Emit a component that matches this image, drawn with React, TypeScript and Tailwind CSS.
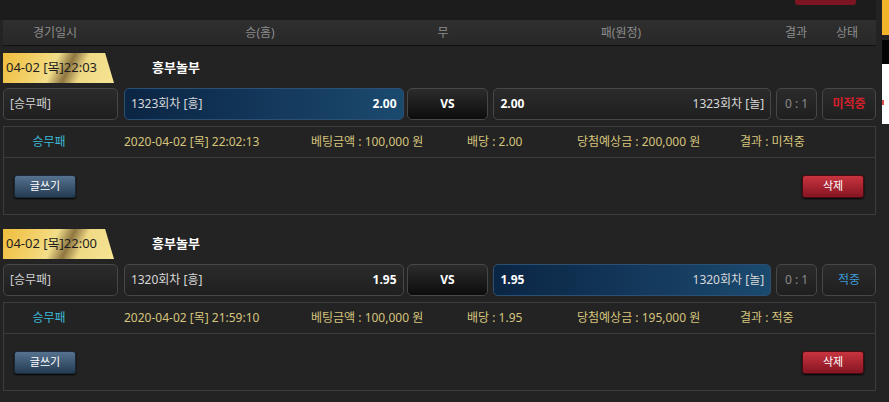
import React from "react"

interface Bet {
  time: string
  name: string
  round: string
  home: string
  away: string
  pick: "home" | "away"
  score: string
  status: string
  win: boolean
  placed: string
  amount: string
  odds: string
  payout: string
}

const bets: Bet[] = [
  {
    time: "04-02 [목]22:03",
    name: "흥부놀부",
    round: "1323회차",
    home: "2.00",
    away: "2.00",
    pick: "home",
    score: "0 : 1",
    status: "미적중",
    win: false,
    placed: "2020-04-02 [목] 22:02:13",
    amount: "100,000 원",
    odds: "2.00",
    payout: "200,000 원",
  },
  {
    time: "04-02 [목]22:00",
    name: "흥부놀부",
    round: "1320회차",
    home: "1.95",
    away: "1.95",
    pick: "away",
    score: "0 : 1",
    status: "적중",
    win: true,
    placed: "2020-04-02 [목] 21:59:10",
    amount: "100,000 원",
    odds: "1.95",
    payout: "195,000 원",
  },
]

const box = "h-[32px] rounded-[5px] border border-[#474747] bg-[linear-gradient(#2b2b2b,#1f1f1f)] flex items-center"
const picked = "h-[32px] rounded-[5px] border border-[#2c4f74] bg-[linear-gradient(90deg,#0b2544,#1b4a6f)] flex items-center"

function BetCard({ bet }: { bet: Bet }) {
  return (
    <div className="mt-[7px] mb-[14px]">
      <div className="flex items-center h-[30px]">
        <div className="w-[111px] h-[30px] flex items-center pl-[3px] text-[13px] text-[#1e1e1e] [clip-path:polygon(0_0,92%_0,100%_100%,0_100%)] bg-[linear-gradient(115deg,#f0bd3c_0%,#f3d574_35%,#f2de8a_45%,#8f7640_58%,#efd985_70%,#f6e594_100%)]">
          {bet.time}
        </div>
        <div className="ml-[38px] text-[13px] font-bold text-white">{bet.name}</div>
      </div>

      <div className="flex mt-[5px] text-[12px]">
        <div className={`${box} w-[115px] pl-[6px] text-[#cfcfcf]`}>[승무패]</div>
        <div className={`${bet.pick === "home" ? picked : box} ml-[6px] w-[280px] justify-between px-[6px]`}>
          <span className="text-[#d8d8d8]">{bet.round} [흥]</span>
          <span className="font-bold text-white">{bet.home}</span>
        </div>
        <div className="ml-[3px] w-[82px] h-[32px] rounded-[5px] border border-[#474747] bg-[linear-gradient(#2c2c2c,#0c0c0c)] flex items-center justify-center font-bold text-white">
          VS
        </div>
        <div className={`${bet.pick === "away" ? picked : box} ml-[5px] w-[278px] justify-between px-[6px]`}>
          <span className="font-bold text-white">{bet.away}</span>
          <span className="text-[#d8d8d8]">{bet.round} [놀]</span>
        </div>
        <div className={`${box} ml-[5px] w-[41px] justify-center text-[#8a8a8a]`}>{bet.score}</div>
        <div
          className={`${box} ml-[5px] w-[54px] justify-center ${bet.win ? "text-[#3a9ad6]" : "text-[#d4202a] font-bold"}`}
        >
          {bet.status}
        </div>
      </div>

      <div className="mt-[6px] border border-[#3c3c3c] text-[12px]">
        <div className="flex items-center h-[31px] border-b border-[#3c3c3c] text-[#d6c47c]">
          <span className="w-[90px] text-center text-[#3cb6d4]">승무패</span>
          <span className="ml-[30px] w-[187px]">{bet.placed}</span>
          <span className="w-[156px]">베팅금액 : {bet.amount}</span>
          <span className="w-[110px]">배당 : {bet.odds}</span>
          <span className="w-[163px]">당첨예상금 : {bet.payout}</span>
          <span>결과 : {bet.status}</span>
        </div>
        <div className="flex justify-between items-center h-[56px] pl-[10px] pr-[11px]">
          <button className="w-[62px] h-[23px] rounded-[3px] border border-[#1b2a3b] bg-[linear-gradient(#56728f,#253b53)] text-[11px] text-white shadow-[0_1px_2px_#000]">
            글쓰기
          </button>
          <button className="w-[62px] h-[23px] rounded-[3px] border border-[#4a0c14] bg-[linear-gradient(#c8343f,#861522)] text-[11px] text-white shadow-[0_1px_2px_#000]">
            삭제
          </button>
        </div>
      </div>
    </div>
  )
}

export default function App() {
  return (
    <div className="w-[889px] h-[402px] overflow-hidden flex bg-[#232323] font-['Noto_Sans','Noto_Sans_CJK_KR',sans-serif]">
      <div className="w-[876px] pl-[3px]">
        <div className="h-[20px] -ml-[3px] pl-[795px] bg-[#1c1c1c]">
          <div className="w-[61px] h-[5px] rounded-b-[3px] bg-[#7c1521]" />
        </div>
        <div className="flex items-center h-[26px] bg-[linear-gradient(#2f2f2f,#282828)] border-b border-[#121212] text-[12px] text-[#8c8c8c]">
          <span className="w-[104px] text-center">경기일시</span>
          <span className="w-[306px] text-center">승(홈)</span>
          <span className="w-[60px] text-center">무</span>
          <span className="w-[296px] text-center">패(원정)</span>
          <span className="w-[54px] text-center">결과</span>
          <span className="w-[48px] text-center">상태</span>
        </div>
        {bets.map((b) => (
          <BetCard key={b.time} bet={b} />
        ))}
      </div>
      <div className="ml-[6px] w-[7px] flex flex-col">
        <div className="h-[35px] bg-[#f2b52a]" />
        <div className="mt-[5px] h-[24px] bg-[#050505]" />
        <div className="h-[60px] bg-white flex flex-col">
          <div className="mt-[36px] w-[2px] h-[5px] bg-[#e05050]" />
        </div>
      </div>
    </div>
  )
}
